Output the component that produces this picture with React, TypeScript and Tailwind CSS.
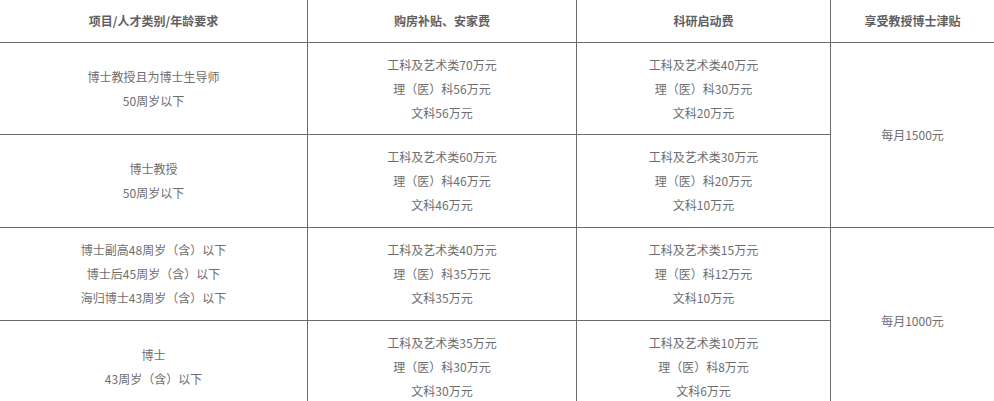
const font = { fontFamily: '"Noto Sans CJK SC", "Liberation Sans", sans-serif' };

type Row = {
  who: string[];
  house: string[];
  research: string[];
};

const rows: Row[] = [
  {
    who: ["博士教授且为博士生导师", "50周岁以下"],
    house: ["工科及艺术类70万元", "理（医）科56万元", "文科56万元"],
    research: ["工科及艺术类40万元", "理（医）科30万元", "文科20万元"],
  },
  {
    who: ["博士教授", "50周岁以下"],
    house: ["工科及艺术类60万元", "理（医）科46万元", "文科46万元"],
    research: ["工科及艺术类30万元", "理（医）科20万元", "文科10万元"],
  },
  {
    who: ["博士副高48周岁（含）以下", "博士后45周岁（含）以下", "海归博士43周岁（含）以下"],
    house: ["工科及艺术类40万元", "理（医）科35万元", "文科35万元"],
    research: ["工科及艺术类15万元", "理（医）科12万元", "文科10万元"],
  },
  {
    who: ["博士", "43周岁（含）以下"],
    house: ["工科及艺术类35万元", "理（医）科30万元", "文科30万元"],
    research: ["工科及艺术类10万元", "理（医）科8万元", "文科6万元"],
  },
];

function Cell({ lines }: { lines: string[] }) {
  return (
    <div className="flex flex-col items-center justify-center bg-white">
      {lines.map((l) => (
        <div key={l} className="leading-[24px]">
          {l}
        </div>
      ))}
    </div>
  );
}

export default function App() {
  return (
    <div className="h-[401px] w-[994px] overflow-hidden bg-white" style={font}>
      <div className="grid grid-cols-[307px_268px_253px_163px] grid-rows-[42px_91px_92px_92px_92px] gap-px bg-[#6b6b6b] text-center text-[12px] text-[#6e6e6e]">
        <div className="flex items-center justify-center bg-white font-bold text-[#5f5f5f]">项目/人才类别/年龄要求</div>
        <div className="flex items-center justify-center bg-white font-bold text-[#5f5f5f]">购房补贴、安家费</div>
        <div className="flex items-center justify-center bg-white font-bold text-[#5f5f5f]">科研启动费</div>
        <div className="flex items-center justify-center bg-white font-bold text-[#5f5f5f]">享受教授博士津贴</div>

        <Cell lines={rows[0].who} />
        <Cell lines={rows[0].house} />
        <Cell lines={rows[0].research} />
        <div className="row-span-2 flex items-center justify-center bg-white">每月1500元</div>

        <Cell lines={rows[1].who} />
        <Cell lines={rows[1].house} />
        <Cell lines={rows[1].research} />

        <Cell lines={rows[2].who} />
        <Cell lines={rows[2].house} />
        <Cell lines={rows[2].research} />
        <div className="row-span-2 flex items-center justify-center bg-white">每月1000元</div>

        <Cell lines={rows[3].who} />
        <Cell lines={rows[3].house} />
        <Cell lines={rows[3].research} />
      </div>
    </div>
  );
}
